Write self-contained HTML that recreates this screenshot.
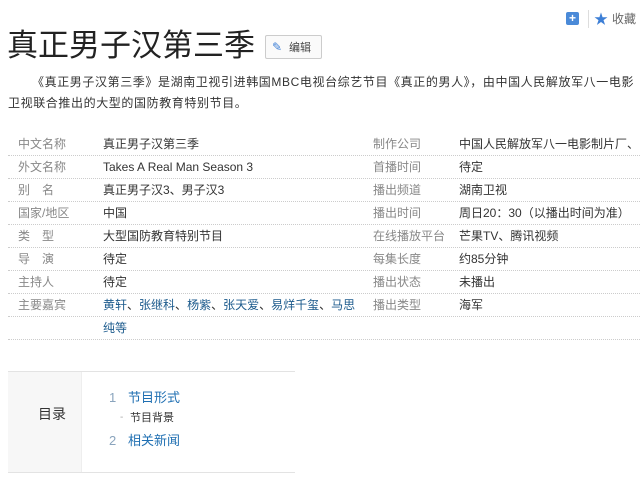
<!DOCTYPE html>
<html><head><meta charset="utf-8"><style>
*{margin:0;padding:0;box-sizing:border-box}
body{width:640px;height:480px;overflow:hidden;background:#fff;font-family:"Liberation Sans","Noto Sans CJK SC",sans-serif;color:#333;position:relative}
.a{position:absolute;white-space:nowrap}
.t{font-size:12px;line-height:14px}
.l{color:#888}
.k{color:#1b5a8c}
.line{position:absolute;left:8px;width:632px;border-top:1px dotted #ccc;height:0}
</style></head><body>
<div class="a" style="left:566px;top:12px;width:13px;height:13px;background:#4a8ad8;border-radius:2px;color:#fff;font-size:12px;line-height:13px;text-align:center;font-weight:bold">+</div>
<div class="a" style="left:588px;top:10px;width:1px;height:18px;background:#ddd"></div>
<div class="a" style="left:594px;top:9px;color:#3d7fd6;font-size:14px">★</div>
<div class="a t" style="left:612px;top:12px;color:#666">收藏</div>
<div class="a" style="left:7px;top:28px;font-size:31px;line-height:36px;color:#222">真正男子汉第三季</div>
<div class="a" style="left:265px;top:35px;width:57px;height:24px;border:1px solid #ccc;border-radius:2px;background:#fafafa"></div>
<div class="a" style="left:272px;top:40px;color:#3d7fd6;font-size:12px">✎</div>
<div class="a t" style="left:289px;top:41px;color:#444;font-size:11px">编辑</div>
<div class="a t" style="left:32px;top:75px;letter-spacing:0.6px">《真正男子汉第三季》是湖南卫视引进韩国MBC电视台综艺节目《真正的男人》，由中国人民解放军八一电影</div>
<div class="a t" style="left:8px;top:96px;letter-spacing:0.6px">卫视联合推出的大型的国防教育特别节目。</div>

<div class="line" style="top:155px"></div>
<div class="line" style="top:178px"></div>
<div class="line" style="top:201px"></div>
<div class="line" style="top:224px"></div>
<div class="line" style="top:247px"></div>
<div class="line" style="top:270px"></div>
<div class="line" style="top:293px"></div>
<div class="line" style="top:316px"></div>
<div class="line" style="top:339px"></div>

<div class="a t l" style="left:18px;top:137px">中文名称</div><div class="a t" style="left:103px;top:137px">真正男子汉第三季</div>
<div class="a t l" style="left:373px;top:137px">制作公司</div><div class="a t" style="left:459px;top:137px">中国人民解放军八一电影制片厂、</div>
<div class="a t l" style="left:18px;top:160px">外文名称</div><div class="a t" style="left:103px;top:160px">Takes A Real Man Season 3</div>
<div class="a t l" style="left:373px;top:160px">首播时间</div><div class="a t" style="left:459px;top:160px">待定</div>
<div class="a t l" style="left:18px;top:183px">别　名</div><div class="a t" style="left:103px;top:183px">真正男子汉3、男子汉3</div>
<div class="a t l" style="left:373px;top:183px">播出频道</div><div class="a t" style="left:459px;top:183px">湖南卫视</div>
<div class="a t l" style="left:18px;top:206px">国家/地区</div><div class="a t" style="left:103px;top:206px">中国</div>
<div class="a t l" style="left:373px;top:206px">播出时间</div><div class="a t" style="left:459px;top:206px">周日20：30（以播出时间为准）</div>
<div class="a t l" style="left:18px;top:229px">类　型</div><div class="a t" style="left:103px;top:229px">大型国防教育特别节目</div>
<div class="a t l" style="left:373px;top:229px">在线播放平台</div><div class="a t" style="left:459px;top:229px">芒果TV、腾讯视频</div>
<div class="a t l" style="left:18px;top:252px">导　演</div><div class="a t" style="left:103px;top:252px">待定</div>
<div class="a t l" style="left:373px;top:252px">每集长度</div><div class="a t" style="left:459px;top:252px">约85分钟</div>
<div class="a t l" style="left:18px;top:275px">主持人</div><div class="a t" style="left:103px;top:275px">待定</div>
<div class="a t l" style="left:373px;top:275px">播出状态</div><div class="a t" style="left:459px;top:275px">未播出</div>
<div class="a t l" style="left:18px;top:298px">主要嘉宾</div><div class="a t" style="left:103px;top:298px"><span class="k">黄轩</span>、<span class="k">张继科</span>、<span class="k">杨紫</span>、<span class="k">张天爱</span>、<span class="k">易烊千玺</span>、<span class="k">马思</span></div>
<div class="a t l" style="left:373px;top:298px">播出类型</div><div class="a t" style="left:459px;top:298px">海军</div>
<div class="a t k" style="left:103px;top:321px">纯等</div>

<div class="a" style="left:8px;top:371px;width:287px;height:102px;border-top:1px solid #e3e3e3;border-bottom:1px solid #e3e3e3"></div>
<div class="a" style="left:8px;top:372px;width:74px;height:100px;background:#f7f7f7;border-right:1px solid #eee"></div>
<div class="a" style="left:38px;top:404px;font-size:14px;color:#333">目录</div>
<div class="a t" style="left:109px;top:391px;font-size:13px;color:#8aa4bd">1</div>
<div class="a t k" style="left:128px;top:391px;font-size:13px;color:#1f6fb2">节目形式</div>
<div class="a t" style="left:120px;top:411px;color:#aaa;font-size:10px">-</div>
<div class="a t" style="left:130px;top:411px;color:#333;font-size:11px">节目背景</div>
<div class="a t" style="left:109px;top:434px;font-size:13px;color:#8aa4bd">2</div>
<div class="a t k" style="left:128px;top:434px;font-size:13px;color:#1f6fb2">相关新闻</div>
</body></html>
